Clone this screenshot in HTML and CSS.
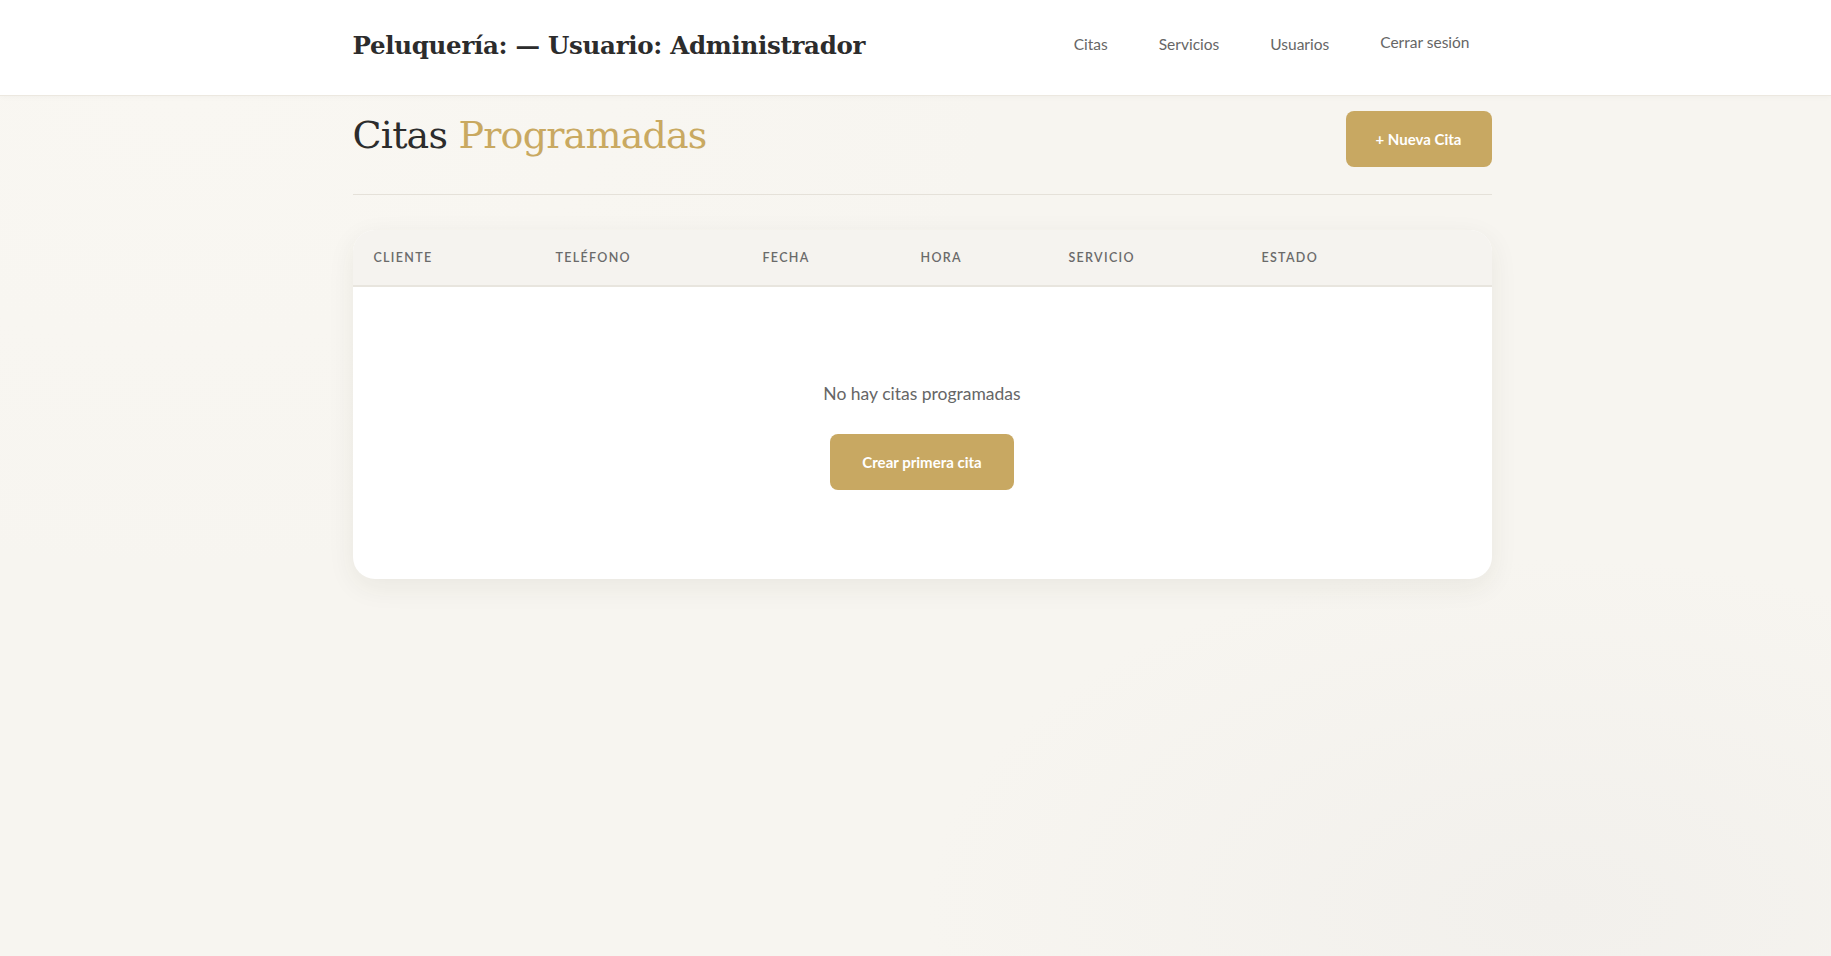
FILE: index.html
```html
<!DOCTYPE html>
<html>
    <head>
        <title>Peluquería - Citas</title>
        <link rel="stylesheet" href="styles.css">
    </head>

    <body>
        <header class="topbar">
            <div class="container topbar-inner">
                <h1 class="brand">Peluquería: — Usuario: Administrador</h1>
                <nav class="nav">
                    <a href="#">Citas</a>
                    <a href="#">Servicios</a>
                    <a href="#">Usuarios</a>
                    <a href="#" class="logout">Cerrar sesión</a>
                </nav>
            </div>
        </header>

        <main class="container">
            <div class="page-head">
                <h2 class="page-title">Citas <span class="accent">Programadas</span></h2>
                <a href="#" class="btn">+ Nueva Cita</a>
            </div>

            <div class="card">
                <table class="citas">
                    <thead>
                        <tr>
                            <th class="c-cliente">Cliente</th>
                            <th class="c-telefono">Teléfono</th>
                            <th class="c-fecha">Fecha</th>
                            <th class="c-hora">Hora</th>
                            <th class="c-servicio">Servicio</th>
                            <th class="c-estado">Estado</th>
                        </tr>
                    </thead>
                </table>
                <div class="empty">
                    <p>No hay citas programadas</p>
                    <a href="#" class="btn">Crear primera cita</a>
                </div>
            </div>
        </main>
    </body>
</html>
```

FILE: styles.css
```css
*{box-sizing: border-box;}
html,body{margin: 0;padding: 0;}
body{
    min-height: 956px;
    font-family: "Lato", "Open Sans", sans-serif;
    color: #2c2c2c;
    background-color: #f7f5f0;
    background-image:
        radial-gradient(ellipse 900px 500px at 85% 95%, #f2f0ec 0%, rgba(242,240,236,0) 70%),
        radial-gradient(ellipse 1200px 700px at 10% 10%, #f9f7f2 0%, rgba(249,247,242,0) 70%);
}
a{text-decoration: none;color: inherit;}

.container{width: 1152px;margin: 0 auto;padding-left: 13px;}

/* top bar */
.topbar{background: #fff;height: 96px;border-bottom: 1px solid #ece8e0;box-shadow: 0 1px 6px rgba(0,0,0,0.03);}
.topbar-inner{display: flex;align-items: center;justify-content: space-between;height: 100%;padding-bottom: 4px;}
.brand{margin: 0;font-family: "DejaVu Serif", serif;font-weight: 600;font-size: 24.5px;letter-spacing: -0.3px;color: #2c2c2c;}
.nav{display: flex;gap: 7px;margin-top: -3px;}
.nav a{padding: 8px 22px;font-size: 15.5px;color: #666;}
.nav a.logout{margin-top: -2px;}

/* page heading */
.page-head{display: flex;justify-content: space-between;align-items: flex-start;padding: 15px 0 27px;border-bottom: 1px solid #e5e1d9;}
.page-title{margin: 0;font-family: "DejaVu Serif", serif;font-weight: normal;font-size: 38px;letter-spacing: -0.8px;line-height: 1.3;color: #2c2c2c;}
.page-title .accent{color: #c9a961;}

.btn{display: inline-block;background: #c8a862;color: #fff;font-weight: 700;font-size: 15px;border-radius: 8px;padding: 18px 28px;line-height: 20px;}
.page-head .btn{width: 146px;text-align: center;padding: 18px 0;}

/* table card */
.card{margin-top: 35px;background: #fff;border-radius: 22px;overflow: hidden;box-shadow: 0 8px 28px rgba(60,50,30,0.07);}
.citas{width: 100%;border-collapse: collapse;table-layout: fixed;}
.citas th{text-align: left;background: #f5f3ef;border-bottom: 2px solid #e8e5de;height: 56px;padding: 0 21px;font-size: 12.5px;font-weight: 600;letter-spacing: 1.3px;text-transform: uppercase;color: #6a6a6a;}
.c-cliente{width: 182px;}
.c-telefono{width: 207px;}
.c-fecha{width: 158px;}
.c-hora{width: 148px;}
.c-servicio{width: 193px;}

.empty{text-align: center;padding: 93px 0 89px;}
.empty p{margin: 0 0 26px;font-size: 17.5px;line-height: 28px;color: #666;}
.empty .btn{width: 184px;padding: 18px 0;}
```
